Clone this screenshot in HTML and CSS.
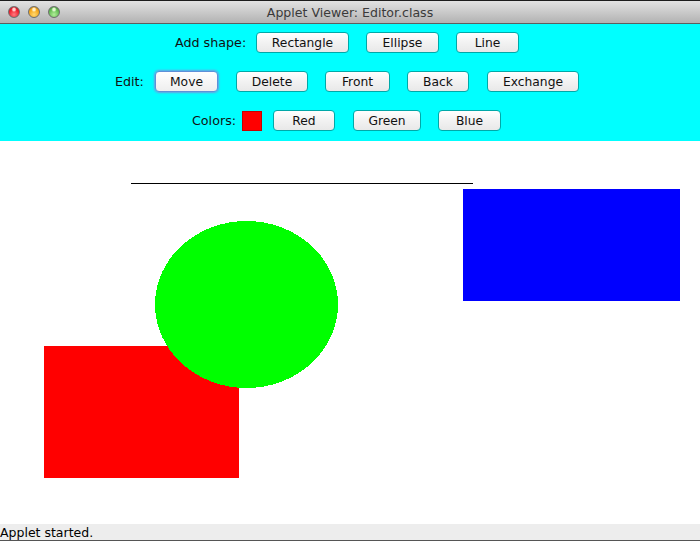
FILE: index.html
```html
<!DOCTYPE html>
<html lang="en">
<head>
<meta charset="utf-8">
<title>Applet Viewer: Editor.class</title>
<link rel="stylesheet" href="styles.css">
</head>
<body>
<div class="window">
  <header class="titlebar">
    <div class="lights">
      <span class="light light-red"></span>
      <span class="light light-yellow"></span>
      <span class="light light-green"></span>
    </div>
    <div class="title">Applet Viewer: Editor.class</div>
  </header>
  <section class="toolbar">
    <div class="row">
      <span class="label label-add">Add shape:</span>
      <button class="btn w-93">Rectangle</button>
      <button class="btn w-73">Ellipse</button>
      <button class="btn w-63">Line</button>
    </div>
    <div class="row">
      <span class="label label-edit">Edit:</span>
      <button class="btn w-63 focused wide-after">Move</button>
      <button class="btn w-72">Delete</button>
      <button class="btn w-65">Front</button>
      <button class="btn w-62 wide-after">Back</button>
      <button class="btn w-92">Exchange</button>
    </div>
    <div class="row row-colors">
      <span class="label label-colors">Colors:</span>
      <span class="swatch"></span>
      <button class="btn w-62 wide-after">Red</button>
      <button class="btn w-68">Green</button>
      <button class="btn w-63">Blue</button>
    </div>
  </section>
  <main class="canvas">
    <svg class="drawing" width="700" height="383" viewBox="0 141 700 383" shape-rendering="crispEdges">
      <rect x="44" y="346" width="195" height="132" fill="#ff0000"/>
      <ellipse cx="246.5" cy="304.5" rx="91.5" ry="83.5" fill="#00ff00"/>
      <rect x="463" y="189" width="217" height="112" fill="#0000ff"/>
      <rect x="131" y="183" width="342" height="1" fill="#000000"/>
    </svg>
  </main>
  <footer class="status">Applet started.</footer>
</div>
</body>
</html>
```
FILE: styles.css
```css
* { box-sizing: border-box; }
html, body { margin: 0; padding: 0; }
body { width: 700px; height: 541px; overflow: hidden; background: #fff; font-family: "DejaVu Sans", sans-serif; }
.window { display: flex; flex-direction: column; width: 700px; height: 541px; border-bottom: 1px solid #555; }

.titlebar { position: relative; height: 24px; flex: none; display: flex; align-items: center; justify-content: center;
  background: linear-gradient(#e2e2e2, #b2b2b2); border-top: 1px solid #1c1c1c; border-bottom: 1px solid #5e5e5e; }
.title { font-size: 12.55px; color: #3a3a3a; }
.lights { position: absolute; left: 8px; top: 5px; display: flex; gap: 8px; }
.light { width: 12px; height: 12px; border-radius: 50%; border: 1px solid #6e6e6e; }
.light-red { background: radial-gradient(circle at 50% 25%, #ffd0d0 0 12%, transparent 30%), radial-gradient(circle at 50% 75%, #ff7a80, #ee1c2a 60%, #a81018); }
.light-yellow { background: radial-gradient(circle at 50% 25%, #fff0c8 0 12%, transparent 30%), radial-gradient(circle at 50% 75%, #ffd870, #f5a518 60%, #b87a10); }
.light-green { background: radial-gradient(circle at 50% 25%, #e0f8d0 0 12%, transparent 30%), radial-gradient(circle at 50% 75%, #b0ee98, #62bc52 60%, #3e8a38); }

.toolbar { flex: none; height: 117px; background: #00ffff; padding: 8px 6px 0 0; display: flex; flex-direction: column; gap: 18px; }
.row { display: flex; justify-content: center; align-items: center; height: 21px; gap: 17px; }
.row-colors { padding-right: 1px; }
.label { font-size: 12.7px; color: #111; white-space: nowrap; }
.label-add { width: 70px; margin-right: -6px; }
.label-edit { width: 28px; margin-right: -5px; }
.label-colors { width: 45px; margin-right: -12px; }
.swatch { width: 20px; height: 20px; background: #ff0000; border: 1px solid #c80000; margin-right: -6px; }

.btn { height: 21px; padding: 0; font: 12.3px "DejaVu Sans", sans-serif; color: #111; text-align: center;
  border: 1px solid #00a8a8; border-radius: 4px; background: linear-gradient(#ffffff, #f2f2f2 50%, #e8e8e8); }
.wide-after { margin-right: 1px; }
.focused { border-color: #5f90d8; box-shadow: 0 0 2px 1px #6f9ce0; background: linear-gradient(#ffffff, #eeeeee); }
.w-93 { width: 93px; }
.w-92 { width: 92px; }
.w-73 { width: 73px; }
.w-72 { width: 72px; }
.w-68 { width: 68px; }
.w-65 { width: 65px; }
.w-63 { width: 63px; }
.w-62 { width: 62px; }

.canvas { flex: 1; background: #fff; min-height: 0; }
.drawing { display: block; }

.status { flex: none; height: 16px; background: #ededed; font-size: 12.5px; line-height: 17px; color: #000; white-space: nowrap; }
```
